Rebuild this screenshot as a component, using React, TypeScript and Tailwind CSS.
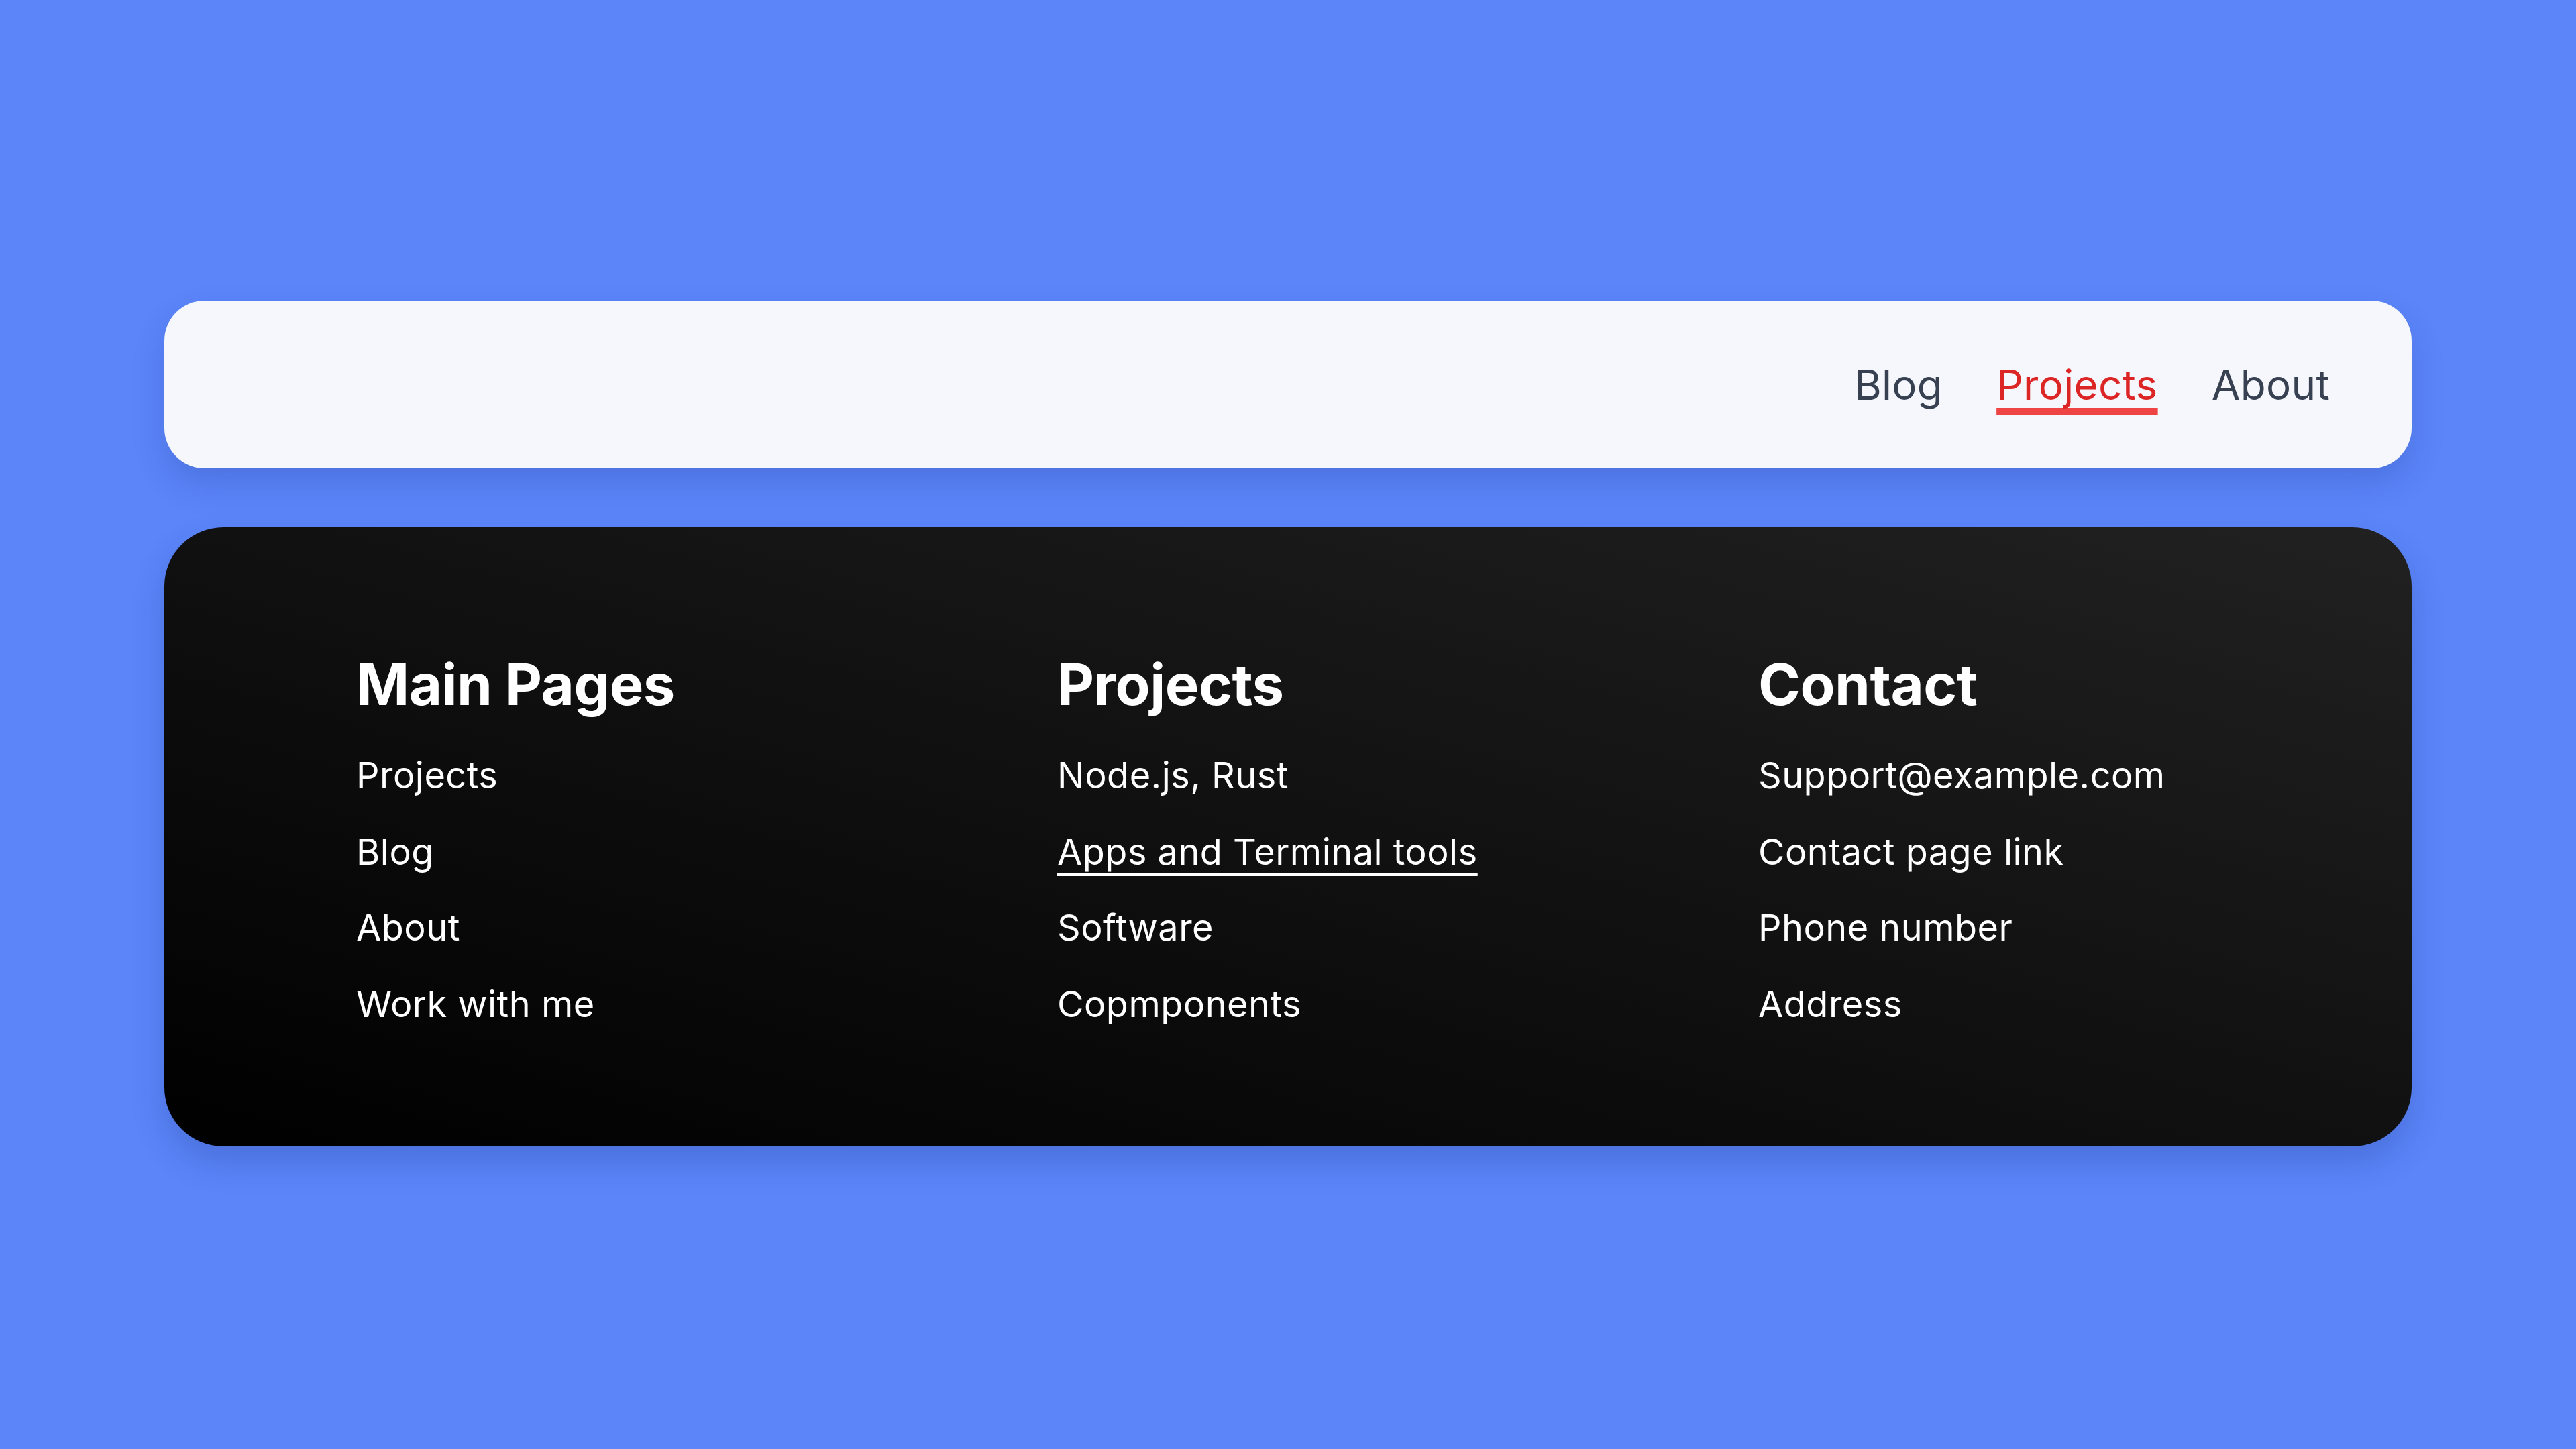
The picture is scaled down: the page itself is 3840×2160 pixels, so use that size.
export default function App() {
  const columns = [
    { title: "Main Pages", links: ["Projects", "Blog", "About", "Work with me"] },
    { title: "Projects", links: ["Node.js, Rust", "Apps and Terminal tools", "Software", "Copmponents"] },
    { title: "Contact", links: ["Support@example.com", "Contact page link", "Phone number", "Address"] },
  ];

  return (
    <div
      className="min-h-screen bg-[#5b85f9] px-[245px] pt-[448px] flex flex-col gap-[88px]"
      style={{ fontFamily: "Inter, 'Noto Sans', sans-serif" }}
    >
      {/* Top bar */}
      <nav className="h-[250px] rounded-[60px] bg-[#f5f7fc] shadow-[0_24px_48px_rgba(20,40,120,0.18)] flex items-center justify-end pr-[122px] gap-[80px] text-[62px] tracking-[0.3px] text-[#374151]">
        <a href="#">Blog</a>
        <a
          href="#"
          className="text-[#dc2626] underline decoration-[#ef4444] decoration-[10px] underline-offset-[12px] [text-decoration-skip-ink:none]"
        >
          Projects
        </a>
        <a href="#">About</a>
      </nav>

      {/* Footer */}
      <footer className="rounded-[88px] bg-[linear-gradient(to_top_right,#000000,#212121)] shadow-[0_24px_48px_rgba(20,40,120,0.22)] pl-[286px] pt-[185px] pb-[156px] grid grid-cols-[1045px_1045px_1fr] text-white">
        {columns.map((col) => (
          <div key={col.title} className="flex flex-col">
            <h3 className="text-[85px] font-bold leading-[100px] tracking-[-0.5px]">{col.title}</h3>
            <ul className="mt-[28px] flex flex-col text-[54px] tracking-[0.5px] leading-[113.5px]">
              {col.links.map((link) => (
                <li key={link}>
                  <a
                    href="#"
                    className={
                      link === "Apps and Terminal tools"
                        ? "underline decoration-[5px] underline-offset-[12px] [text-decoration-skip-ink:none]"
                        : ""
                    }
                  >
                    {link}
                  </a>
                </li>
              ))}
            </ul>
          </div>
        ))}
      </footer>
    </div>
  );
}
